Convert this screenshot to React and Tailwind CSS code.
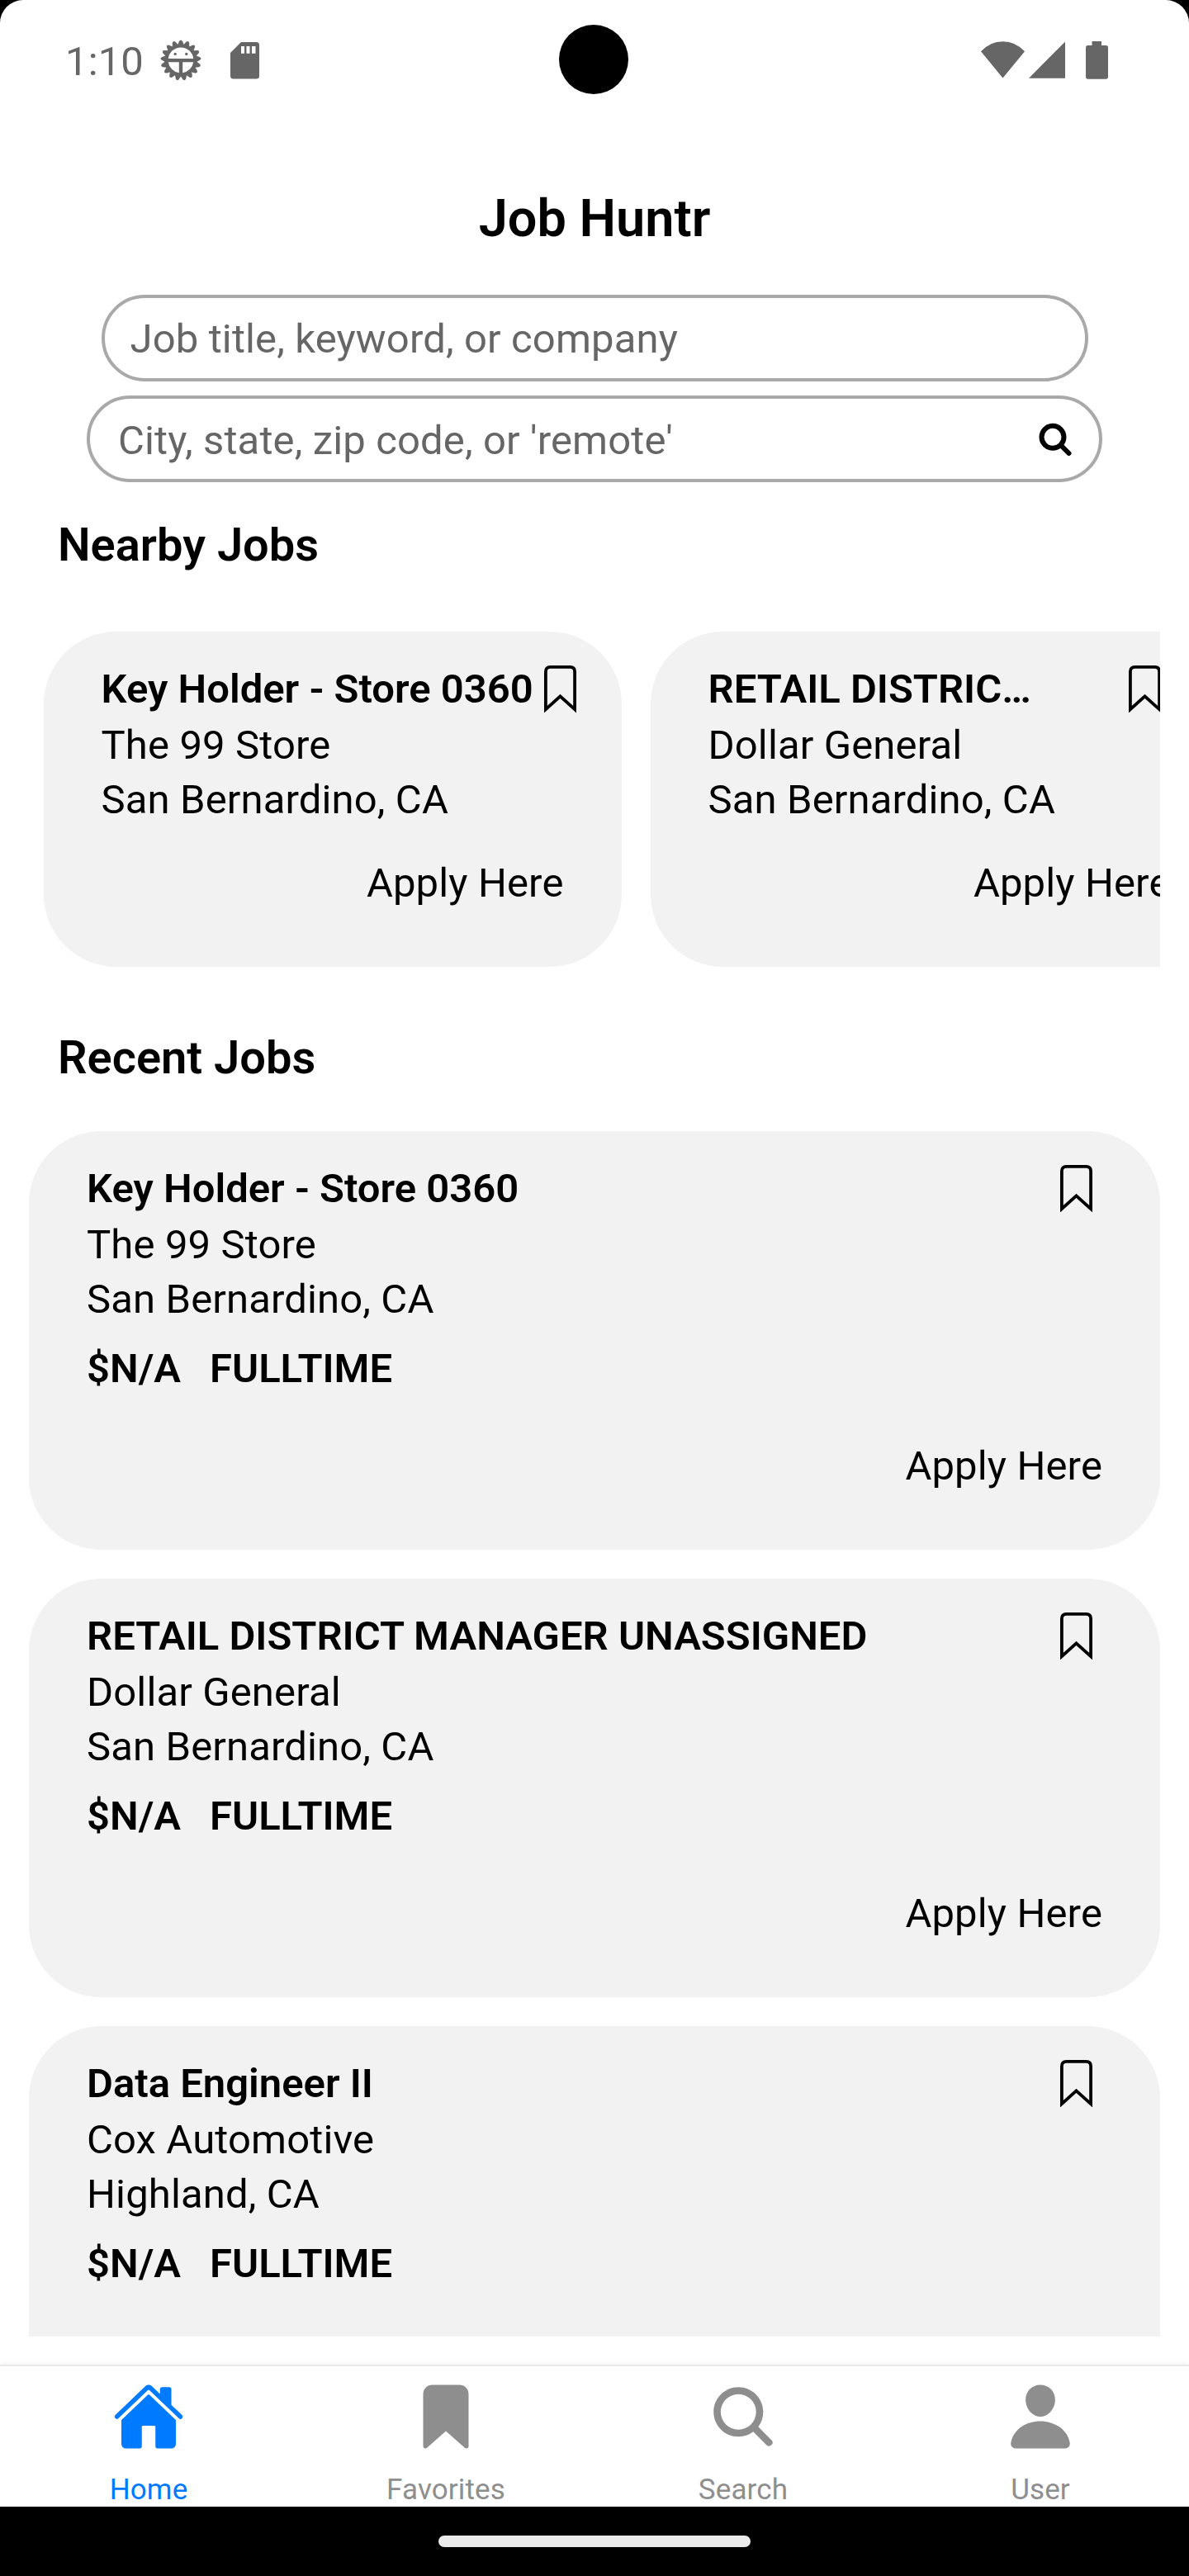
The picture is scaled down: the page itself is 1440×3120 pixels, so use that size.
import React from "react";
import { IoHome, IoBookmark, IoSearch, IoPerson } from "react-icons/io5";

const jobs = [
  { title: "Key Holder - Store 0360", short: "Key Holder - Store 0360", company: "The 99 Store", city: "San Bernardino, CA" },
  { title: "RETAIL DISTRICT MANAGER UNASSIGNED", short: "RETAIL DISTRIC…", company: "Dollar General", city: "San Bernardino, CA" },
  { title: "Data Engineer II", short: "Data Engineer II", company: "Cox Automotive", city: "Highland, CA" },
];

const tabs = [
  { label: "Home", Icon: IoHome, active: true },
  { label: "Favorites", Icon: IoBookmark },
  { label: "Search", Icon: IoSearch },
  { label: "User", Icon: IoPerson },
];

const TEETH = Array.from({ length: 17 }, (_, i) => ((i + 0.5) * 360) / 17);

function GearIcon() {
  return (
    <svg width="50" height="50" viewBox="-25 -25 50 50" fill="#666666">
      {TEETH.map((a) => (
        <path key={a} transform={`rotate(${a})`} d="M-4.3 17.5 L-2 23 Q0 26.2 2 23 L4.3 17.5Z" />
      ))}
      <circle r="19.3" />
      <path d="M-15.2 -2 A15.3 15.3 0 0 1 15.2 -2Z" fill="#fff" />
      <path d="M-15.2 2.2 H-2.2 V15.2 A15.3 15.3 0 0 1 -15.2 2.2Z M15.2 2.2 H2.2 V15.2 A15.3 15.3 0 0 0 15.2 2.2Z" fill="#fff" />
      <circle cx="-6.8" cy="-7.6" r="1.7" />
      <circle cx="6.8" cy="-7.6" r="1.7" />
    </svg>
  );
}

function StatusBar() {
  return (
    <div className="relative flex h-[145px] items-start pl-[79px] pr-[98px]">
      <span className="mt-[42px] w-[97px] text-[49px] leading-[66px] text-[#666666]">1:10</span>
      <div className="ml-[18px] mt-[48px]">
        <GearIcon />
      </div>
      <svg className="ml-[35px] mt-[51px]" width="35" height="44.500" viewBox="0 0 35 44.5">
        <path d="M13 0H31.500Q35 0 35 3.500V41Q35 44.500 31.500 44.500H3.500Q0 44.500 0 41V13Z" fill="#666666" />
        <path d="M13 5h4v8.700h-4zM19.500 5h4v8.700h-4zM26 5h4.500v8.700H26z" fill="#fff" />
      </svg>
      <div className="absolute left-[677px] top-[30px] size-[84px] rounded-full bg-black" />
      <div className="ml-auto mt-[50px] flex">
        <svg width="53" height="46" viewBox="0 0 53 46" fill="#666666">
          <path d="M26.500 44.500 0 12.300Q11 0.200 26.500 0.200T53 12.300Z" />
        </svg>
        <svg className="ml-[5px]" width="44" height="46" viewBox="0 0 44 46" fill="#666666">
          <path d="M44 0.500V44.700H0Z" />
        </svg>
        <svg className="ml-[25px]" width="27" height="46" viewBox="0 0 27 46" fill="#666666">
          <path d="M7.500 0h11.500v5H24.500Q27 5 27 8V42.700Q27 45.700 24.500 45.700H2.500Q0 45.700 0 42.700V8Q0 5 2.500 5H7.500Z" />
        </svg>
      </div>
    </div>
  );
}

function BookmarkOutline() {
  return (
    <svg className="ml-[13px] mr-[12px] mt-[4px] shrink-0" width="39" height="57" viewBox="0 0 39 57" fill="none" stroke="#000" strokeWidth="3.800">
      <path d="M1.900 53.200V7.500Q1.900 1.900 7.500 1.900H31.500Q37.100 1.900 37.100 7.500V53.200L19.500 37.300Z" />
    </svg>
  );
}

function NearbyCard({ job }) {
  return (
    <div className="h-[406px] w-[700px] shrink-0 rounded-[87.5px] bg-[#f2f2f2] px-[70px] pt-[37px]">
      <div className="flex h-[68px] justify-between">
        <p className="shrink-0 whitespace-nowrap font-semibold tracking-normal">{job.short}</p>
        <BookmarkOutline />
      </div>
      <p>{job.company}</p>
      <p>{job.city}</p>
      <p className="mt-[35px] text-right">Apply Here</p>
    </div>
  );
}

function RecentCard({ job }) {
  return (
    <div className="h-[507px] shrink-0 rounded-[87.5px] bg-[#f2f2f2] px-[70px] pt-[37px]">
      <div className="flex h-[68px] justify-between">
        <p className="shrink-0 whitespace-nowrap font-semibold tracking-normal">{job.title}</p>
        <BookmarkOutline />
      </div>
      <p>{job.company}</p>
      <p>{job.city}</p>
      <div className="mt-[18px] flex gap-[35px] font-semibold tracking-normal">
        <span>$N/A</span>
        <span>FULLTIME</span>
      </div>
      <p className="mt-[52px] text-right">Apply Here</p>
    </div>
  );
}

export default function App() {
  return (
    <div className="h-[3120px] w-[1440px] overflow-hidden bg-black font-['Roboto',sans-serif] text-[49px] leading-[66px] tracking-[0.13px] text-black">
      <div className="flex h-[3036px] flex-col rounded-t-[28px] bg-white">
        <StatusBar />
        <h1 className="mt-[80px] h-[80px] text-center text-[63px] font-semibold leading-[80px] tracking-normal">Job Huntr</h1>
        <div className="ml-[122.5px] mt-[52px] flex h-[105px] w-[1195px] items-center rounded-full border-4 border-[#a9a9a9] pl-[31px] text-[#666666]">
          <span className="pt-[2px]">Job title, keyword, or company</span>
        </div>
        <div className="ml-[105px] mt-[17px] flex h-[105px] w-[1230px] items-center rounded-full border-4 border-[#a9a9a9] pl-[34px] pr-[33px] text-[#666666]">
          <span className="pt-[4px]">City, state, zip code, or 'remote'</span>
          <svg className="ml-auto" width="40" height="40" viewBox="0 0 40 40" fill="none" stroke="#000" strokeWidth="6">
            <circle cx="17" cy="17.300" r="13.500" />
            <path d="M27 27.500 36.500 37" strokeLinecap="round" />
          </svg>
        </div>
        <h2 className="ml-[70px] mt-[38px] h-[76px] text-[56px] font-semibold leading-[76px] tracking-normal">Nearby Jobs</h2>
        <div className="mx-[35px] mt-[67px] flex gap-[35px] overflow-hidden pl-[17.5px]">
          {jobs.slice(0, 2).map((job) => (
            <NearbyCard key={job.title} job={job} />
          ))}
        </div>
        <h2 className="ml-[70px] mt-[72px] h-[76px] text-[56px] font-semibold leading-[76px] tracking-normal">Recent Jobs</h2>
        <div className="mx-[35px] mt-[51px] flex h-[1460px] flex-col gap-[35px] overflow-hidden">
          {jobs.map((job) => (
            <RecentCard key={job.title} job={job} />
          ))}
        </div>
        <nav className="mt-[34px] grid h-[172px] grid-cols-4 border-t-2 border-[#e8e8e8] bg-white shadow-[0_-1px_7px_rgba(0,0,0,0.06)]">
          {tabs.map(({ label, Icon, active }) => (
            <div key={label} className={active ? "flex flex-col items-center text-[#007aff]" : "flex flex-col items-center text-[#8e8e8f]"}>
              <Icon className="mt-[17px] size-[88px]" />
              <span className="mt-[24px] text-[35px] leading-[42px]">{label}</span>
            </div>
          ))}
        </nav>
      </div>
      <div className="flex h-[84px] justify-center pt-[35px]">
        <div className="h-[14px] w-[378px] rounded-full bg-[#ebebeb]" />
      </div>
    </div>
  );
}
